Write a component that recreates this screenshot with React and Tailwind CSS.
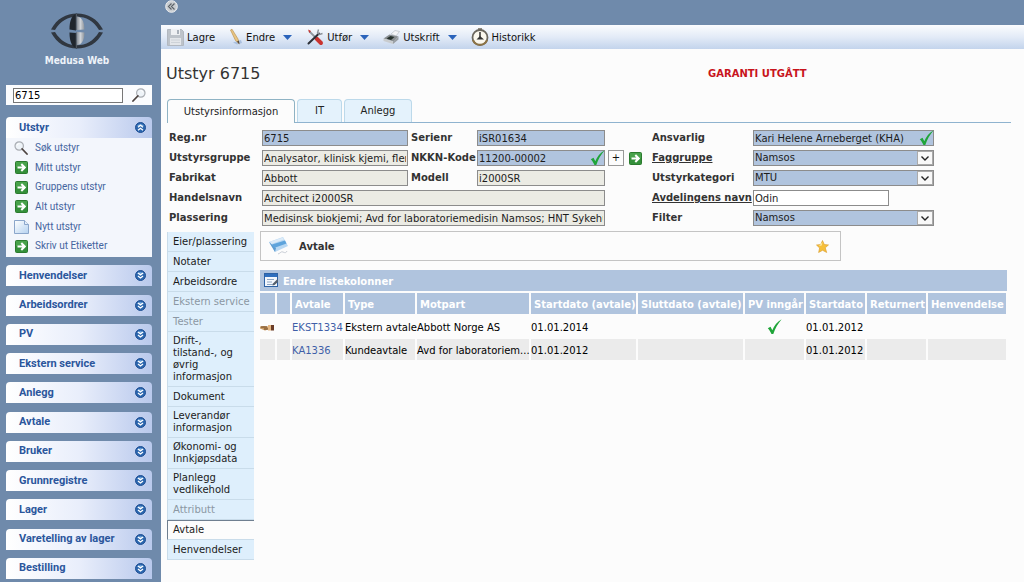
import React from "react";

const ArrowIcon = ({ className = "" }) => (
  <svg className={`size-[13px] shrink-0 ${className}`} viewBox="0 0 13 13" aria-hidden="true">
    <rect x="0.5" y="0.5" width="12" height="12" rx="1" fill="#34903a" stroke="#2b7a2e" />
    <path d="M1 1h11v5H1z" fill="#5cb35c" opacity=".5" />
    <path d="M2.5 6.5h7M6.3 3l3.5 3.5L6.3 10" fill="none" stroke="#fff" strokeWidth="2" />
  </svg>
);

const SearchIcon = ({ className = "" }) => (
  <svg className={`size-[14px] shrink-0 ${className}`} viewBox="0 0 14 14" aria-hidden="true">
    <circle cx="5.2" cy="5" r="4.2" fill="#eef3f8" stroke="#a9adb3" strokeWidth="1.2" />
    <path d="M3 4.5a2.5 2.5 0 0 1 2.5-2" fill="none" stroke="#fff" />
    <path d="M8.2 8l4.8 5" stroke="#4d4340" strokeWidth="1.8" strokeLinecap="round" />
  </svg>
);

const PageIcon = () => (
  <svg className="h-[14px] w-[15px] shrink-0" viewBox="0 0 15 14" aria-hidden="true">
    <defs>
      <linearGradient id="page" x1="0" y1="0" x2="1" y2="1">
        <stop offset="0" stopColor="#fff" />
        <stop offset="1" stopColor="#b5d2f0" />
      </linearGradient>
    </defs>
    <path d="M.5.5h10l4 4v9H.5z" fill="url(#page)" stroke="#8ba6cb" />
    <path d="M10.5.5v4h4" fill="#e4eefa" stroke="#8ba6cb" />
  </svg>
);

const Round = ({ up }) => (
  <svg className="size-[11px]" viewBox="0 0 11 11" aria-hidden="true">
    <circle cx="5.5" cy="5.5" r="5" fill="#2b66ae" stroke="#1f4f93" />
    <path d="M2 4a4 3.5 0 0 1 7 0z" fill="#7db0e2" />
    <path
      d={up ? "M3 5.3l2.5-2 2.5 2M3 8.3l2.5-2 2.5 2" : "M3 3l2.5 2L8 3M3 6l2.5 2L8 6"}
      fill="none"
      stroke="#fff"
      strokeWidth="1.3"
    />
  </svg>
);

const Check = ({ className = "" }) => (
  <svg className={`h-4 w-[15px] ${className}`} viewBox="0 0 15 16" aria-hidden="true">
    <path
      d="M.8 9.2l2.7-1.4 1.8 3.4C7.200 6.800 10 3 14.600.300 10.800 4.800 8.400 9.200 6.300 15H4.500C3.500 12.700 2.400 10.800.800 9.200z"
      fill="#1fa539"
    />
  </svg>
);

const Logo = () => (
  <svg className="h-9 w-[54px]" viewBox="0 0 54 36" aria-hidden="true">
    <defs>
      <linearGradient id="disc" x1="0" y1="0" x2="1" y2="0">
        <stop offset="0" stopColor="#80878f" />
        <stop offset=".5" stopColor="#cfd3d8" />
        <stop offset="1" stopColor="#8b929a" />
      </linearGradient>
    </defs>
    <path d="M1 16.500C7 5.500 16 .500 27 .500S47 5.500 53 16.500l-4 .5C43.500 8 36 3.800 27 3.800S10.500 8 5 17z" fill="#303740" />
    <path d="M1 19.500C7 30.500 16 35.500 27 35.500S47 30.500 53 19.500l-4-.5C43.500 28 36 32.200 27 32.200S10.500 28 5 19z" fill="#303740" />
    <path d="M27 .500c-5 1-7.500 7-7.500 16l6.500 1V2z" fill="#20262d" />
    <path d="M19.500 19.500c0 9 2.500 15 7.500 16l-1-15.500z" fill="#20262d" />
    <path d="M26.500 3.500c5 0 8 5 8 13l-8 .5zM26.500 19l8 .5c0 8-3 12.500-8 12.500z" fill="url(#disc)" />
    <path d="M26.300 1v16M26.300 19.500V35" stroke="#5b636d" />
  </svg>
);

const SaveIcon = () => (
  <svg className="h-[18px] w-[17px]" viewBox="0 0 17 18" aria-hidden="true">
    <path d="M.5 1.500h14l2 2v14H.5z" fill="#bdc3ca" stroke="#b2b8c0" />
    <path d="M4 1h9v6H4z" fill="#eef0f3" />
    <path d="M10 2h2v4h-2z" fill="#a9b0b9" />
    <path d="M3 10h11v7H3z" fill="#e3e6ea" />
    <path d="M4 12h9M4 14.500h9" stroke="#cdd2d8" />
  </svg>
);

const PencilIcon = () => (
  <svg className="h-[18px] w-3.5" viewBox="0 0 14 18" aria-hidden="true">
    <path d="M4 14.500l8-2.500 1 3-5 1.500z" fill="#a9bfdf" />
    <path d="M1.500 2l1.500-.8L9 11l1 4.500L6.500 12.500z" fill="#e8c584" stroke="#b68a42" strokeWidth=".6" />
    <path d="M8 13.500l1.800-1 .7 4z" fill="#56483a" />
  </svg>
);

const ToolsIcon = () => (
  <svg className="size-[18px]" viewBox="0 0 18 18" aria-hidden="true">
    <path d="M3 3l8 8" stroke="#8f969e" strokeWidth="1.800" />
    <path d="M10.500 10.500l4.500 4.500" stroke="#c9332f" strokeWidth="4" strokeLinecap="round" />
    <path d="M13 5.500L2.500 15.500" stroke="#2c3038" strokeWidth="2" strokeLinecap="round" />
    <path d="M12.500 1.500l-1 3.500 2 1.500 3-1" fill="none" stroke="#8a9199" strokeWidth="1.400" />
    <path d="M2 1.500l3 1.500-1.500 2z" fill="#c9332f" />
  </svg>
);

const PrinterIcon = () => (
  <svg className="h-[15px] w-[17px]" viewBox="0 0 17 15" aria-hidden="true">
    <path d="M8 4l4-3.500 4.500 1L13 6z" fill="#f4f5f7" stroke="#b9bec4" strokeWidth=".7" />
    <path d="M.5 8.500l6-4 9 2-5 5z" fill="#8a8f92" />
    <path d="M.5 8.500v2.500l9.500 3v-2.500z" fill="#c9ccce" />
    <path d="M10 11.500l5.500-5v3L10 14z" fill="#9a9fa4" />
    <path d="M3.500 8.500l4-2.500 4 1-3.500 3z" fill="#26312c" />
  </svg>
);

const ClockIcon = () => (
  <svg className="size-[18px]" viewBox="0 0 18 18" aria-hidden="true">
    <path d="M7 0h4v3H7z" fill="#8e8a80" />
    <circle cx="9" cy="9.500" r="7.500" fill="#fbf8ee" stroke="#6b675e" strokeWidth="1.800" />
    <path d="M2 12a7.500 7.500 0 0 0 14 0" fill="none" stroke="#8d7445" strokeWidth="2" />
    <path d="M9 4v6" stroke="#222" strokeWidth="1.400" />
    <path d="M5.500 11.500l3.500-3.500 4 3.500z" fill="#333" />
  </svg>
);

const Down = () => (
  <svg className="h-[5px] w-[9px]" viewBox="0 0 9 5" aria-hidden="true">
    <path d="M0 0h9L4.500 5z" fill="#2a63bb" />
  </svg>
);

const sideLinks = [
  ["Søk utstyr", "search"],
  ["Mitt utstyr", "arrow"],
  ["Gruppens utstyr", "arrow"],
  ["Alt utstyr", "arrow"],
  ["Nytt utstyr", "page"],
  ["Skriv ut Etiketter", "arrow"],
];

const groups = [
  "Henvendelser", "Arbeidsordrer", "PV", "Ekstern service", "Anlegg", "Avtale",
  "Bruker", "Grunnregistre", "Lager", "Varetelling av lager", "Bestilling",
];

const sections = [
  "Eier/plassering", "Notater", "Arbeidsordre", "Ekstern service", "Tester",
  "Drift-,\ntilstand-, og\nøvrig\ninformasjon", "Dokument", "Leverandør informasjon",
  "Økonomi- og Innkjøpsdata", "Planlegg vedlikehold", "Attributt", "Avtale", "Henvendelser",
];
const disabledSections = ["Ekstern service", "Tester", "Attributt"];

function GroupHeader({ title, up }) {
  return (
    <button
      type="button"
      aria-expanded={!!up}
      className="flex h-[21px] w-full shrink-0 items-center justify-between rounded-t-[4px] bg-gradient-to-r from-white via-[#e9eefb] to-[#b9c9ec] pr-1.5 pl-[13px] text-[11px] font-bold text-[#2b569c]"
    >
      {title}
      <Round up={up} />
    </button>
  );
}

function Sidebar() {
  return (
    <aside className="flex w-[161px] shrink-0 flex-col bg-[#6f8aab] pr-[9px] pb-[3px] pl-1.5 font-[Roboto,'DejaVu_Sans_Condensed',sans-serif] text-[10px] leading-3">
      <div className="flex h-[85px] flex-col items-center pt-[13px] pr-1">
        <Logo />
        <div className="mt-1.5 font-['DejaVu_Sans_Condensed','DejaVu_Sans',sans-serif] font-bold text-[#eef3f9]">Medusa Web</div>
      </div>
      <form className="flex h-5 items-center bg-[#fbfcfe] pr-1.5 pl-[7px]">
        <input
          aria-label="Søk"
          defaultValue="6715"
          className="h-[15px] w-[110px] border border-[#777] bg-white px-px font-['DejaVu_Sans',sans-serif] text-[10px] text-black"
        />
        <button type="button" aria-label="Søk" className="ml-auto">
          <SearchIcon className="-scale-x-100" />
        </button>
      </form>
      <nav className="mt-3 flex flex-1 flex-col justify-between">
        <div>
          <GroupHeader title="Utstyr" up />
          <ul className="flex h-[119px] flex-col bg-[#f3f6fc] pb-px">
            {sideLinks.map(([label, icon]) => (
              <li key={label} className="flex flex-1 items-center">
                <a href="#" className="flex items-center text-[#45659f]">
                  <span className="ml-2 flex w-[21px]">
                    {icon === "search" && <SearchIcon />}
                    {icon === "page" && <PageIcon />}
                    {icon === "arrow" && <ArrowIcon className="ml-px" />}
                  </span>
                  {label}
                </a>
              </li>
            ))}
          </ul>
        </div>
        {groups.map((g) => (
          <GroupHeader key={g} title={g} />
        ))}
      </nav>
    </aside>
  );
}

function ToolButton({ icon, children, menu }) {
  return (
    <button type="button" className="flex items-center">
      {icon}
      <span className="ml-[3px] pt-px">{children}</span>
      {menu && <span className="ml-2"><Down /></span>}
    </button>
  );
}

function Field({ label, id, value, blue, check, plain, span, link, indent, width = "w-full" }) {
  const bg = blue ? "bg-[#b0c4de]" : plain ? "bg-white" : "bg-[#ebebe4]";
  return (
    <>
      <label
        htmlFor={id}
        className={`font-bold whitespace-nowrap ${link ? "underline" : ""} ${indent ? "pl-[3px]" : ""}`}
      >
        {label}
      </label>
      <div className={`relative flex ${span ? "col-span-3 mr-0.5" : ""} ${width}`}>
        <input
          id={id}
          defaultValue={value}
          className={`h-4 w-full min-w-0 border border-[#8c8c8c] px-px text-[#1c1c1c] ${bg}`}
        />
        {check && <Check className="absolute top-0 right-0" />}
      </div>
    </>
  );
}

function Choice({ label, id, value, link }) {
  return (
    <>
      <label htmlFor={id} className={`font-bold whitespace-nowrap ${link ? "underline" : ""}`}>{label}</label>
      <div className="relative flex">
        <select id={id} className="h-4 w-full appearance-none border border-[#8c8c8c] bg-[#b0c4de] px-px text-[#1c1c1c]">
          <option>{value}</option>
        </select>
        <span className="pointer-events-none absolute top-px right-px flex h-3.5 w-4 items-center justify-center border border-[#aaa] bg-[#f8f8f8]">
          <svg className="h-[5px] w-2" viewBox="0 0 8 5" aria-hidden="true">
            <path d="M.5.5L4 4 7.500.500" fill="none" stroke="#222" strokeWidth="1.400" />
          </svg>
        </span>
      </div>
    </>
  );
}

const columns = [
  ["", "w-[15px]"], ["", "w-[13px]"], ["Avtale", "w-[51px]"], ["Type", "w-[70px]"],
  ["Motpart", "w-[112px]"], ["Startdato (avtale)", "w-[105px]"], ["Sluttdato (avtale)", "w-[105px]"],
  ["PV inngår", "w-[59px]"], ["Startdato", "w-[59px]"], ["Returnert", "w-[59px]"], ["Henvendelse", ""],
];

const rows = [
  ["hand", "", "EKST1334", "Ekstern avtale", "Abbott Norge AS", "01.01.2014", "", "check", "01.01.2012", "", ""],
  ["", "", "KA1336", "Kundeavtale", "Avd for laboratoriem...", "01.01.2012", "", "", "01.01.2012", "", ""],
];

const Hand = () => (
  <svg className="h-[7px] w-3.5" viewBox="0 0 14 7" aria-hidden="true">
    <path d="M0 2.500L4 2l4 .5v3L5 6.500 0 4.500z" fill="#c99a63" />
    <path d="M1 3h6M4 5h5" stroke="#6b4522" />
    <path d="M8 1h3v5.500H8z" fill="#e6b985" />
    <path d="M11 1h3v5.500h-3z" fill="#6b3d28" />
  </svg>
);

function AgreementTable() {
  return (
    <div className="mt-[9px]">
      <button type="button" className="flex h-[21px] w-full items-center bg-[#b0c4de] pl-1 font-bold text-white">
        <svg className="mr-[5px] h-[15px] w-3.5" viewBox="0 0 14 15" aria-hidden="true">
          <rect x=".5" y=".5" width="13" height="13" fill="#f4f8fd" stroke="#2d62a5" />
          <path d="M1 1h12v3H1z" fill="#2f6fbe" />
          <path d="M3 6.500h7M3 9h5M3 11.500h6" stroke="#8ea6c4" />
          <path d="M13.500 6L9 10.500l-.5 2 2-.5 3.500-3z" fill="#555f6c" />
        </svg>
        <span className="pt-0.5">Endre listekolonner</span>
      </button>
      <table className="-ml-0.5 w-[calc(100%+3px)] table-fixed border-separate border-spacing-x-0.5 border-spacing-y-0.5">
        <thead>
          <tr className="h-[21px]">
            {columns.map(([c, w], i) => (
              <th key={i} className={`bg-[#b0c4de] p-0 pt-0.5 pl-[3px] text-left font-bold whitespace-nowrap text-white ${w}`}>{c}</th>
            ))}
          </tr>
        </thead>
        <tbody>
          {rows.map((r, y) => (
            <tr key={y} className="h-[21px] odd:bg-transparent even:bg-[#ebebeb]">
              {r.map((c, x) => (
                <td key={x} className={`p-0 whitespace-nowrap text-black ${c === "check" ? "" : "pt-0.5"}`}>
                  {c === "hand" ? <Hand /> : c === "check" ? <Check className="mx-auto" /> : x === 2 ? (
                    <a href="#" className="text-[#3f5fa8]">{c}</a>
                  ) : c}
                </td>
              ))}
            </tr>
          ))}
        </tbody>
      </table>
    </div>
  );
}

export default function App() {
  return (
    <div className="flex min-h-screen bg-[#fcfcfc] font-['DejaVu_Sans',Verdana,sans-serif] text-[10px] leading-3 text-[#333]">
      <Sidebar />
      <main className="min-w-0 flex-1">
        <div className="h-[25px] bg-[#6f8aab] pl-1">
          <button type="button" aria-label="Skjul meny" className="block">
            <svg className="size-[13px]" viewBox="0 0 13 13" aria-hidden="true">
              <circle cx="6.500" cy="6.500" r="5.800" fill="#c9cdd1" stroke="#f0f1f2" />
              <path d="M6.500 3.500l-3 3 3 3M9.500 3.500l-3 3 3 3" fill="none" stroke="#5c6269" strokeWidth="1.200" />
            </svg>
          </button>
        </div>
        <div className="flex h-6 items-center gap-3.5 bg-gradient-to-b from-[#fbfcfe] via-[#e3ebf7] to-[#c3d4ec] pl-1.5 text-[#111]">
          <ToolButton icon={<SaveIcon />}>Lagre</ToolButton>
          <ToolButton icon={<PencilIcon />} menu>Endre</ToolButton>
          <ToolButton icon={<ToolsIcon />} menu>Utfør</ToolButton>
          <ToolButton icon={<PrinterIcon />} menu>Utskrift</ToolButton>
          <ToolButton icon={<ClockIcon />}>Historikk</ToolButton>
        </div>
        <div className="flex h-[50px] items-center pl-[5px]">
          <h1 className="w-[542px] text-[16px] leading-5">Utstyr 6715</h1>
          <strong className="text-[#c8141c]">GARANTI UTGÅTT</strong>
        </div>
        <div role="tablist" className="mr-[13px] ml-1.5 flex h-6 items-stretch gap-0.5 border-b border-[#8fb3cf] text-[#222]">
          <button role="tab" aria-selected="true" type="button" className="-mb-px w-32 rounded-t-[4px] border border-b-0 border-[#8fb3c4] bg-[#fcfcfc]">Utstyrsinformasjon</button>
          <button role="tab" aria-selected="false" type="button" className="w-[45px] rounded-t-[4px] border border-b-0 border-[#bcd9ea] bg-[#e4f2fc]">IT</button>
          <button role="tab" aria-selected="false" type="button" className="w-[68px] rounded-t-[4px] border border-b-0 border-[#bcd9ea] bg-[#e4f2fc]">Anlegg</button>
        </div>
        <form className="mt-[5px] grid auto-rows-[20px] grid-cols-[93px_146px_69px_128px_47px_101px_181px] items-center pl-2">
          <Field label="Reg.nr" id="reg" value="6715" blue />
          <Field label="Serienr" id="serie" value="iSR01634" blue indent />
          <span />
          <Field label="Ansvarlig" id="ansvarlig" value="Kari Helene Arneberget (KHA)" blue check />

          <Field label="Utstyrsgruppe" id="gruppe" value="Analysator, klinisk kjemi, flere analytter" />
          <Field label="NKKN-Kode" id="nkkn" value="11200-00002" blue check indent />
          <div className="flex items-center gap-[5px] pl-[3px]">
            <button type="button" className="flex size-4 items-center justify-center border border-[#999] bg-[#fcfcfc] text-[#111]">+</button>
            <button type="button" aria-label="Gå til kode"><ArrowIcon /></button>
          </div>
          <Choice label="Faggruppe" id="fag" value="Namsos" link />

          <Field label="Fabrikat" id="fabrikat" value="Abbott" />
          <Field label="Modell" id="modell" value="i2000SR" indent />
          <span />
          <Choice label="Utstyrkategori" id="kategori" value="MTU" />

          <Field label="Handelsnavn" id="handel" value="Architect i2000SR" span />
          <span />
          <Field label="Avdelingens navn" id="avdeling" value="Odin" plain link width="w-[136px]" />

          <Field label="Plassering" id="plass" value="Medisinsk biokjemi; Avd for laboratoriemedisin Namsos; HNT Sykehuset Namsos" span />
          <span />
          <Choice label="Filter" id="filter" value="Namsos" />
        </form>
        <div className="mt-[3px] flex items-start pr-[17px] pl-1.5">
          <nav className="mt-px w-[87px] shrink-0 text-[#1b1b1b]">
            {sections.map((s) => (
              <a
                key={s}
                href="#"
                className={`flex min-h-5 items-center border-b py-[3px] pr-1 pl-[5px] whitespace-pre-line ${
                  s === "Avtale"
                    ? "border-t border-l border-t-[#6f7f90] border-b-[#c9dcea] border-l-[#6f7f90] bg-[#fcfcfc]"
                    : "border-l border-b-[#c9dcea] border-l-[#c9dcea] bg-[#deeffc]"
                } ${disabledSections.includes(s) ? "text-[#8b97a3]" : ""}`}
              >
                {s}
              </a>
            ))}
          </nav>
          <section className="ml-1.5 min-w-0 flex-1">
            <div className="flex h-[30px] max-w-[581px] items-center border border-[#c4c4c4] pr-[11px] pl-2">
              <svg className="h-[18px] w-5" viewBox="0 0 20 18" aria-hidden="true">
                <path d="M0 5L14 0l5 9L6 15z" fill="#b8d8f3" />
                <path d="M0 5l6 10 1-4z" fill="#5c9bd0" />
                <path d="M3 7.500L16 3.500l1.500 3L5 11z" fill="#5ea4dc" />
                <path d="M1 4.800L14 .500l1 2L2.500 7z" fill="#dcebf8" />
                <path d="M9 17c3-1 3-3 5-2s3 1 4-1" fill="none" stroke="#c9ced6" />
              </svg>
              <h2 className="ml-2.5 pt-px font-bold">Avtale</h2>
              <button type="button" aria-label="Favoritt" className="ml-auto">
                <svg className="size-[13px]" viewBox="0 0 13 13" aria-hidden="true">
                  <path d="M6.500.500l1.800 4 4.200.4-3.200 2.900 1.400 4.700-4.100-2.200L2.600 12.500l1-4.500L.500 5l4.200-.5z" fill="#f6bf3a" stroke="#d99a2b" strokeWidth=".6" />
                  <path d="M6.500 2l-.800 3.500L3 6z" fill="#fde9a0" />
                </svg>
              </button>
            </div>
            <AgreementTable />
          </section>
        </div>
      </main>
    </div>
  );
}
